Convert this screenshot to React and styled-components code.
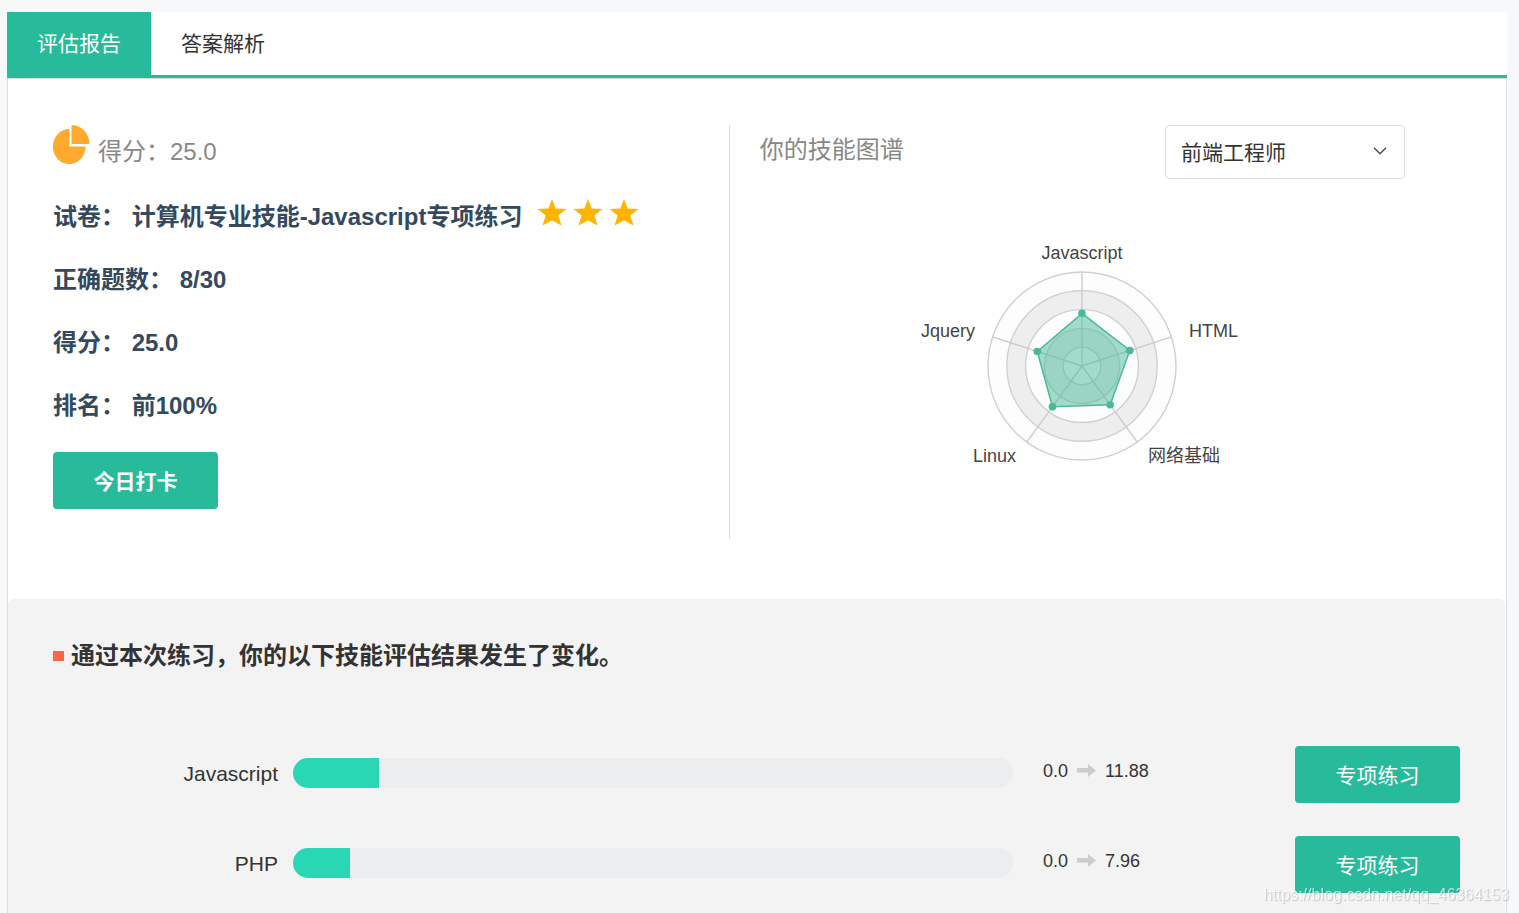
import React, { useState } from 'react'
import styled, { createGlobalStyle } from 'styled-components';
import { ChevronDown } from 'lucide-react';

const skills = [
    { name: 'Javascript', before: '0.0', after: '11.88' },
    { name: 'PHP', before: '0.0', after: '7.96' },
]

const radarSkills = [
    { name: 'Javascript', value: 56, x: 180, y: 20, anchor: 'middle' },
    { name: 'HTML', value: 53.5, x: 287, y: 98, anchor: 'start' },
    { name: '网络基础', value: 51, x: 246, y: 223, anchor: 'start' },
    { name: 'Linux', value: 53.5, x: 114, y: 223, anchor: 'end' },
    { name: 'Jquery', value: 50, x: 73, y: 98, anchor: 'end' },
]

const CENTER_X = 180
const CENTER_Y = 127
const RADIUS = 94

const pointAt = (index, radius) => {
    const angle = (Math.PI * 2 * index) / radarSkills.length
    return [CENTER_X + radius * Math.sin(angle), CENTER_Y - radius * Math.cos(angle)]
}

function PieIcon() {
    return (
        <PieSvg width="37" height="40" viewBox="0 0 37 40" fill="#ffa92f" aria-hidden="true">
            <path d="M16.500 4V21.500H32.500A16.300 17.600 0 1 1 16.500 4Z" />
            <path d="M18.500 0A18 19 0 0 1 36.500 19H18.500Z" />
        </PieSvg>
    )
}

function Star() {
    return (
        <svg width="30" height="30" viewBox="0 0 30 30" fill="#ffb400" aria-hidden="true">
            <path d="M15 1L18.700 10.500L29.500 11L21.300 17.500L24.500 27.500L15 22.200L5.500 27.500L8.700 17.500L.5 11L11.300 10.500Z" />
        </svg>
    )
}

function Arrow() {
    return (
        <svg width="19" height="14" viewBox="0 0 19 14" fill="#ccc" aria-hidden="true">
            <path d="M0 4H11V0L19 6.500L11 13V8.500H0Z" />
        </svg>
    )
}

function Radar() {
    const points = radarSkills.map((skill, i) => pointAt(i, RADIUS * skill.value / 100))
    return (
        <RadarSvg width="360" height="240" viewBox="0 0 360 240" role="img" aria-label="技能图谱">
            {[5, 4, 3, 2, 1].map((ring) => (
                <circle
                    key={ring}
                    cx={CENTER_X}
                    cy={CENTER_Y}
                    r={RADIUS * ring / 5}
                    fill={ring % 2 ? '#fdfdfd' : '#eee'}
                    stroke="#d0d0d0"
                    strokeWidth="1.4"
                />
            ))}
            {radarSkills.map((skill, i) => {
                const [x, y] = pointAt(i, RADIUS)
                return <line key={skill.name} x1={CENTER_X} y1={CENTER_Y} x2={x} y2={y} stroke="#ccc" strokeWidth="1.4" />
            })}
            <polygon points={points.join(' ')} fill="#49b99a" fillOpacity="0.5" stroke="#49b99a" strokeWidth="1.5" />
            {points.map(([x, y]) => <circle key={x} cx={x} cy={y} r="3.8" fill="#49b99a" />)}
            {radarSkills.map((skill) => (
                <text key={skill.name} x={skill.x} y={skill.y} textAnchor={skill.anchor}>{skill.name}</text>
            ))}
        </RadarSvg>
    )
}

function App() {
    const [tab, setTab] = useState('report')
    return (
        <PageStyled>
            <GlobalStyle />
            <Tabs>
                <Tab type="button" $active={tab === 'report'} onClick={() => setTab('report')}>评估报告</Tab>
                <Tab type="button" $active={tab === 'answers'} onClick={() => setTab('answers')}>答案解析</Tab>
            </Tabs>
            <Panel>
                <Overview>
                    <Summary>
                        <Score>
                            <PieIcon />
                            <span>得分：25.0</span>
                        </Score>
                        <Detail>
                            试卷： 计算机专业技能-Javascript专项练习
                            <Stars><Star /><Star /><Star /></Stars>
                        </Detail>
                        <Detail>正确题数： 8/30</Detail>
                        <Detail>得分： 25.0</Detail>
                        <Detail>排名： 前100%</Detail>
                        <CheckInButton type="button">今日打卡</CheckInButton>
                    </Summary>
                    <SkillMap>
                        <SkillMapHeader>
                            <label htmlFor="job">你的技能图谱</label>
                            <SelectWrap>
                                <select id="job" defaultValue="frontend">
                                    <option value="frontend">前端工程师</option>
                                </select>
                                <ChevronDown size={22} strokeWidth={1.8} />
                            </SelectWrap>
                        </SkillMapHeader>
                        <Radar />
                    </SkillMap>
                </Overview>
                <Changes>
                    <ChangesTitle>通过本次练习，你的以下技能评估结果发生了变化。</ChangesTitle>
                    <SkillList>
                        {skills.map((skill) => (
                            <SkillRow key={skill.name}>
                                <SkillName>{skill.name}</SkillName>
                                <Track role="progressbar" aria-label={skill.name} aria-valuenow={skill.after}>
                                    <Fill style={{ width: `${skill.after}%` }} />
                                </Track>
                                <SkillValues>
                                    {skill.before}
                                    <Arrow />
                                    {skill.after}
                                </SkillValues>
                                <Button type="button">专项练习</Button>
                            </SkillRow>
                        ))}
                    </SkillList>
                </Changes>
            </Panel>
            <Watermark>https://blog.csdn.net/qq_46364153</Watermark>
        </PageStyled>
    )
}

const GlobalStyle = createGlobalStyle`
    *{
        box-sizing: border-box;
    }
    body{
        margin: 0;
        background-color: #f7f8fa;
        color: #333;
        font-family: "Liberation Sans", "Noto Sans CJK SC", sans-serif;
    }
    button, select{
        font-family: inherit;
    }
`;

const PageStyled = styled.main`
    padding: 12px 12px 0 7px;
`;

const Tabs = styled.nav`
    display: flex;
    height: 66px;
    background: linear-gradient(to top, #27bb9b 3px, #fff 3px);
`;

const Tab = styled.button`
    padding: 0 30px 6px;
    border: 0;
    background-color: ${({ $active }) => ($active ? '#27bb9b' : 'transparent')};
    color: ${({ $active }) => ($active ? '#fff' : '#333')};
    font-size: 21px;
    cursor: pointer;
`;

const Panel = styled.section`
    border: 1px solid #ddd;
    background-color: #fff;
`;

const Overview = styled.div`
    display: grid;
    grid-template-columns: calc(48% + 1px) 1fr;
    padding: 46px 45px 60px;
`;

const Summary = styled.div`
    min-height: 414px;
    border-right: 1px solid #ddd;
`;

const Score = styled.div`
    display: flex;
    gap: 8px;
    height: 60px;
    color: #888;
    font-size: 24px;
    line-height: 54px;
`;

const PieSvg = styled.svg`
    flex: none;
`;

const Detail = styled.div`
    display: flex;
    align-items: center;
    color: #34495e;
    font-size: 24px;
    font-weight: bold;
    line-height: 63px;
`;

const Stars = styled.span`
    display: flex;
    gap: 6px;
    margin-left: 15px;
    padding-bottom: 8px;
`;

const Button = styled.button`
    width: 165px;
    height: 57px;
    padding: 0 0 2px;
    border: 0;
    border-radius: 4px;
    background-color: #27bb9b;
    color: #fff;
    font-size: 21px;
    cursor: pointer;
`;

const CheckInButton = styled(Button)`
    margin-top: 15px;
    font-weight: bold;
`;

const SkillMap = styled.div`
    padding: 0 56px 0 30px;
`;

const SkillMapHeader = styled.div`
    display: flex;
    justify-content: space-between;
    margin-bottom: 60px;
    label{
        color: #888;
        font-size: 24px;
        line-height: 50px;
    }
`;

const SelectWrap = styled.div`
    position: relative;
    width: 240px;
    height: 54px;
    select{
        width: 100%;
        height: 100%;
        padding: 0 45px 0 15px;
        border: 1px solid #ddd;
        border-radius: 4px;
        appearance: none;
        background-color: #fff;
        color: #333;
        font-size: 21px;
    }
    svg{
        position: absolute;
        top: 15px;
        right: 14px;
        color: #555;
        pointer-events: none;
    }
`;

const RadarSvg = styled.svg`
    display: block;
    margin: 0 auto;
    text{
        fill: #444;
        font-size: 18px;
    }
`;

const Changes = styled.div`
    margin-right: 1px;
    padding: 45px 45px 33px;
    border-radius: 6px;
    background-color: #f3f3f3;
`;

const ChangesTitle = styled.h2`
    display: flex;
    align-items: center;
    gap: 7px;
    margin: 0 0 78px;
    font-size: 24px;
    line-height: 24px;
    &::before{
        content: "";
        width: 11px;
        height: 10px;
        background-color: #ff6547;
    }
`;

const SkillList = styled.ul`
    display: grid;
    gap: 33px;
    margin: 0;
    padding: 0;
    list-style: none;
`;

const SkillRow = styled.li`
    display: grid;
    grid-template-columns: 225px 1fr 252px 165px;
    gap: 15px;
`;

const SkillName = styled.span`
    text-align: right;
    font-size: 21px;
    line-height: 56px;
`;

const Track = styled.div`
    height: 30px;
    margin-top: 12px;
    border-radius: 15px;
    background-color: #ebedef;
    overflow: hidden;
`;

const Fill = styled.div`
    height: 100%;
    background-color: #29d7b5;
`;

const SkillValues = styled.span`
    display: flex;
    align-items: center;
    gap: 9px;
    height: 50px;
    padding-left: 15px;
    font-size: 18px;
`;

const Watermark = styled.div`
    position: fixed;
    right: 10px;
    bottom: 8px;
    color: rgba(255, 255, 255, .7);
    font-size: 16px;
    line-height: 20px;
    text-shadow: 1px 1px 1px rgba(0, 0, 0, .2);
    pointer-events: none;
`;

export default App;
